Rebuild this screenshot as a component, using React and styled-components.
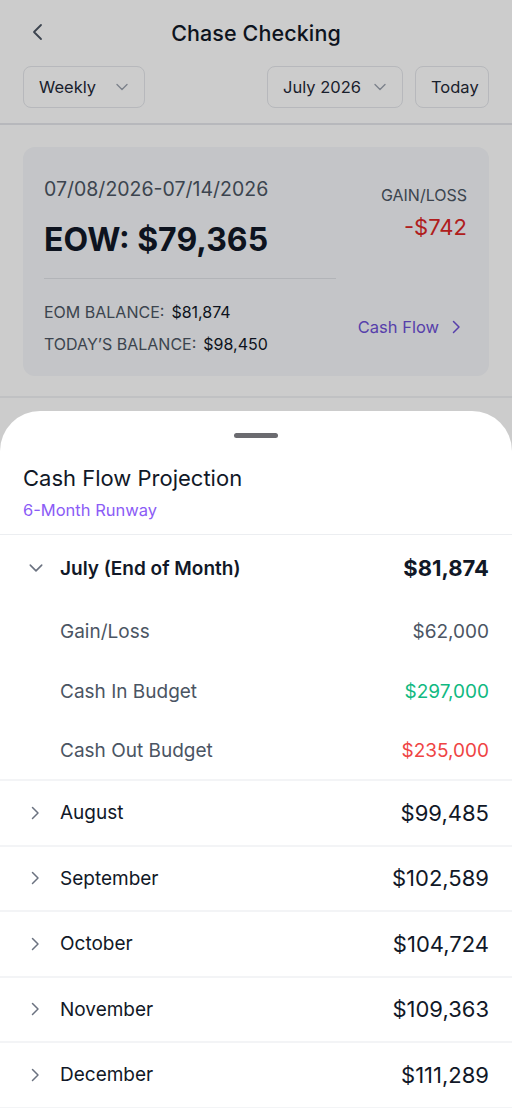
import React from 'react';
import styled, { createGlobalStyle } from 'styled-components';

const GlobalStyle = createGlobalStyle`
  * { box-sizing: border-box; }
  body {
    margin: 0;
    font-family: Inter, "Noto Sans", sans-serif;
    background: #fff;
  }
`

const Screen = styled.div`
  position: relative;
  width: 512px;
  height: 1108px;
  overflow: hidden;
  background: #ffffff;
`

const Header = styled.div`
  height: 66px;
  display: flex;
  align-items: center;
  justify-content: center;
  position: relative;
  padding: 0 23px;
`

const BackBtn = styled.div`
  position: absolute;
  left: 30px;
  top: 23px;
  display: flex;
`

const Title = styled.div`
  font-size: 21.5px;
  font-weight: 500;
  color: #111827;
  letter-spacing: 0.1px;
`

const Controls = styled.div`
  display: flex;
  align-items: center;
  gap: 12px;
  padding: 0 23px 15px;
  border-bottom: 2px solid #e5e7eb;
`

const Select = styled.div`
  height: 42px;
  width: ${p => p.w}px;
  border: 1px solid #e5e7eb;
  border-radius: 8px;
  display: flex;
  align-items: center;
  justify-content: space-between;
  padding: 0 15px;
  font-size: 16.5px;
  color: #1f2937;
  margin-left: ${p => (p.push ? 'auto' : '0')};
`

const CardWrap = styled.div`
  padding: 22px 23px 20px;
  border-bottom: 2px solid #f1f2f4;
`

const Card = styled.div`
  height: 229px;
  background: #f5f7fa;
  border-radius: 12px;
  padding: 29px 22px 0 21px;
  display: flex;
  justify-content: space-between;
`

const LeftCol = styled.div`
  width: 292px;
  display: flex;
  flex-direction: column;
`

const DateRange = styled.div`
  font-size: 19.5px;
  color: #4b5563;
  line-height: 26px;
`

const Eow = styled.div`
  font-size: 32px;
  font-weight: 700;
  color: #111827;
  margin-top: 18px;
  line-height: 40px;
`

const Rule = styled.div`
  height: 1px;
  background: #dfe2e7;
  margin: 18px 0 23px;
`

const BalanceLine = styled.div`
  font-size: 16px;
  color: #111827;
  line-height: 20px;
  margin-bottom: 12px;
  span {
    color: #4b5563;
    margin-right: 7px;
  }
`

const RightCol = styled.div`
  display: flex;
  flex-direction: column;
  align-items: flex-end;
  padding-top: 9px;
`

const GainLabel = styled.div`
  font-size: 16px;
  color: #4b5563;
  line-height: 20px;
`

const GainValue = styled.div`
  font-size: 22px;
  color: #dc2626;
  margin-top: 9px;
  line-height: 26px;
`

const FlowLink = styled.div`
  margin-top: 77px;
  margin-right: 4px;
  display: flex;
  align-items: center;
  gap: 10px;
  font-size: 16.5px;
  color: #6d4fd6;
`

const Dim = styled.div`
  position: absolute;
  inset: 0;
  background: rgba(0, 0, 0, 0.2);
`

const Sheet = styled.div`
  position: absolute;
  left: 0;
  right: 0;
  top: 411px;
  bottom: 0;
  background: #ffffff;
  border-radius: 40px 40px 0 0;
`

const Handle = styled.div`
  width: 44px;
  height: 5px;
  border-radius: 3px;
  background: #6b6b70;
  margin: 22px auto 0;
`

const SheetHead = styled.div`
  padding: 25px 23px 14px;
  border-bottom: 1px solid #eceef1;
`

const SheetTitle = styled.div`
  font-size: 22px;
  color: #111827;
  line-height: 30px;
`

const SheetSub = styled.div`
  font-size: 16.5px;
  color: #8b5cf6;
  margin-top: 7px;
  line-height: 20px;
`

const Row = styled.div`
  height: ${p => p.h}px;
  display: flex;
  align-items: center;
  padding: 0 23px 0 28px;
  border-bottom: ${p => (p.line ? '2px solid #f3f4f6' : 'none')};
`

const Chevron = styled.div`
  width: 32px;
  display: flex;
  align-items: center;
`

const Label = styled.div`
  flex: 1;
  font-size: 19px;
  font-weight: ${p => (p.bold ? 600 : 400)};
  color: ${p => (p.sub ? '#4b5563' : '#111827')};
  padding-left: ${p => (p.sub ? '32px' : '0')};
`

const Amount = styled.div`
  font-size: ${p => p.size || 22}px;
  font-weight: ${p => (p.bold ? 700 : 400)};
  color: ${p => p.color || '#111827'};
`

const ChevDown = ({ size = 14, color = '#9ca3af' }) => (
  <svg width={size} height={size} viewBox="0 0 14 14" fill="none">
    <path d="M2 4.5 L7 9.5 L12 4.5" stroke={color} strokeWidth="1.4" strokeLinecap="round" strokeLinejoin="round" />
  </svg>
)

const ChevRight = ({ color = '#6b7280' }) => (
  <svg width="14" height="16" viewBox="0 0 14 16" fill="none">
    <path d="M4.5 2.5 L10 8 L4.5 13.5" stroke={color} strokeWidth="1.5" strokeLinecap="round" strokeLinejoin="round" />
  </svg>
)

const months = [
  ['August', '$99,485'],
  ['September', '$102,589'],
  ['October', '$104,724'],
  ['November', '$109,363'],
  ['December', '$111,289'],
]

export default function App() {
  return (
    <Screen>
      <GlobalStyle />
      <Header>
        <BackBtn>
          <svg width="16" height="18" viewBox="0 0 16 18" fill="none">
            <path d="M11 2 L4 9 L11 16" stroke="#4b5563" strokeWidth="1.8" strokeLinecap="round" strokeLinejoin="round" />
          </svg>
        </BackBtn>
        <Title>Chase Checking</Title>
      </Header>
      <Controls>
        <Select w={122}>Weekly <ChevDown /></Select>
        <Select w={136} push>July 2026 <ChevDown /></Select>
        <Select w={74}>Today</Select>
      </Controls>
      <CardWrap>
        <Card>
          <LeftCol>
            <DateRange>07/08/2026-07/14/2026</DateRange>
            <Eow>EOW: $79,365</Eow>
            <Rule />
            <BalanceLine><span>EOM BALANCE:</span>$81,874</BalanceLine>
            <BalanceLine><span>TODAY’S BALANCE:</span>$98,450</BalanceLine>
          </LeftCol>
          <RightCol>
            <GainLabel>GAIN/LOSS</GainLabel>
            <GainValue>-$742</GainValue>
            <FlowLink>Cash Flow <ChevRight color="#6d4fd6" /></FlowLink>
          </RightCol>
        </Card>
      </CardWrap>
      <Dim />
      <Sheet>
        <Handle />
        <SheetHead>
          <SheetTitle>Cash Flow Projection</SheetTitle>
          <SheetSub>6-Month Runway</SheetSub>
        </SheetHead>
        <Row h={66}>
          <Chevron><ChevDown size={16} color="#6b7280" /></Chevron>
          <Label bold>July (End of Month)</Label>
          <Amount bold>$81,874</Amount>
        </Row>
        <Row h={60}>
          <Label sub>Gain/Loss</Label>
          <Amount size={19} color="#4b5563">$62,000</Amount>
        </Row>
        <Row h={60}>
          <Label sub>Cash In Budget</Label>
          <Amount size={19} color="#10b981">$297,000</Amount>
        </Row>
        <Row h={60} line>
          <Label sub>Cash Out Budget</Label>
          <Amount size={19} color="#ef4444">$235,000</Amount>
        </Row>
        {months.map(([m, v]) => (
          <Row key={m} h={65.5} line>
            <Chevron><ChevRight /></Chevron>
            <Label>{m}</Label>
            <Amount>{v}</Amount>
          </Row>
        ))}
      </Sheet>
    </Screen>
  )
}
